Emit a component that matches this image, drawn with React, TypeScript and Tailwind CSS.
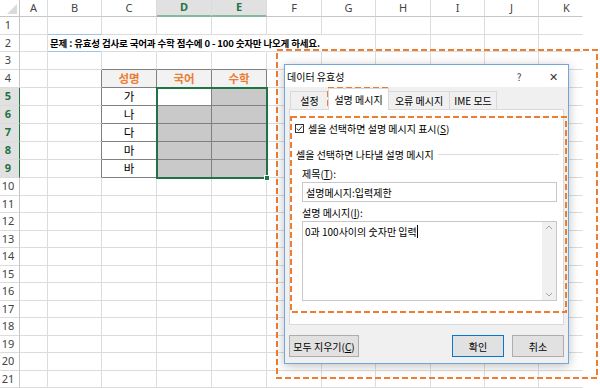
import React from 'react';

const COL_W = ['w-[20px]', 'w-[28px]', 'w-[54px]', 'w-[55px]', 'w-[55px]', 'w-[55px]', 'w-[55px]', 'w-[54px]', 'w-[55px]', 'w-[54px]', 'w-[54px]', 'w-[44px]'];
const COL_LABELS = ['', 'A', 'B', 'C', 'D', 'E', 'F', 'G', 'H', 'I', 'J', 'K'];
const NAMES: Record<number, string> = { 5: '가', 6: '나', 7: '다', 8: '마', 9: '바' };
const HEAD: Record<number, string> = { 3: '성명', 4: '국어', 5: '수학' };

function rowH(r: number) {
  if (r === 2) return 'h-[17px]';
  if (r <= 9) return 'h-[18px]';
  return r % 2 === 0 ? 'h-[18px]' : 'h-[17px]';
}

function cellCls(r: number, c: number) {
  const inTable = r >= 4 && r <= 9 && c >= 3 && c <= 5;
  const cls = ['flex items-center justify-center shrink-0 border-r border-b', COL_W[c], rowH(r)];
  if (inTable || (c === 2 && r >= 4 && r <= 9)) cls.push('border-r-[#808080]');
  else if ((r === 2 && c >= 2 && c <= 6) || c === 11) cls.push('border-r-transparent');
  else cls.push('border-r-[#dcdcdc]');
  if (inTable || (r === 3 && c >= 3 && c <= 5)) cls.push('border-b-[#808080]');
  else if (c === 2 && (r === 1 || r === 2)) cls.push('border-b-[#9dc3e6]');
  else cls.push('border-b-[#dcdcdc]');
  if (r === 4 && inTable) cls.push('bg-[#f2f2f2] text-[#ed7d31] font-bold');
  else if (inTable && ((r === 5 && c === 5) || (r >= 6 && c >= 4))) cls.push('bg-[#c9c9c9]');
  return cls.join(' ');
}

function Sheet() {
  const rows = Array.from({ length: 21 }, (_, i) => i + 1);
  return (
    <div className="flex flex-col">
      {/* column headers */}
      <div className="flex h-[17px] text-[11px] text-[#444] [font-family:'Noto_Sans',sans-serif]">
        {COL_LABELS.map((l, c) => {
          if (c === 0)
            return (
              <div key={c} className="w-[20px] h-[17px] shrink-0 border-r border-b border-[#c6c6c6] flex items-end justify-end p-[2px]">
                <svg width="10" height="10" viewBox="0 0 10 10">
                  <polygon points="10,0 10,10 0,10" fill="#dadada" />
                </svg>
              </div>
            );
          const sel = c === 4 || c === 5;
          return (
            <div
              key={c}
              className={`${COL_W[c]} h-[17px] shrink-0 flex items-center ${c === 11 ? 'justify-start pl-[24px] border-r-transparent' : 'justify-center border-r-[#dcdcdc]'} border-r ${
                sel ? 'bg-[#e1e1e1] text-[#217346] font-bold border-b-2 border-b-[#86b99b]' : 'border-b border-b-[#c6c6c6]'
              }`}
            >
              {l}
            </div>
          );
        })}
      </div>
      {rows.map((r) => {
        const selRow = r >= 5 && r <= 9;
        return (
          <div key={r} className="flex">
            <div
              className={`w-[20px] ${rowH(r)} shrink-0 flex items-center justify-center pr-[3px] border-b border-b-[#dcdcdc] border-r text-[11px] [font-family:'Noto_Sans',sans-serif] ${
                selRow ? 'bg-[#e1e1e1] text-[#217346] font-bold border-r-[#217346]' : 'text-[#444] border-r-[#c6c6c6]'
              }`}
            >
              {r}
            </div>
            {COL_LABELS.slice(1).map((_, i) => {
              const c = i + 1;
              let content: React.ReactNode = null;
              if (r === 2 && c === 2)
                content = (
                  <span className="self-center ml-[2px] whitespace-nowrap font-bold text-[9.5px] tracking-[-0.15px] text-black relative">
                    문제 : 유효성 검사로 국어과 수학 점수에 0 - 100 숫자만 나오게 하세요.
                  </span>
                );
              if (r === 4 && HEAD[c]) content = <span className="text-[11.5px]">{HEAD[c]}</span>;
              if (c === 3 && NAMES[r]) content = <span className="text-[11.5px] text-black">{NAMES[r]}</span>;
              return (
                <div key={c} className={`${cellCls(r, c)} ${r === 2 && c === 2 ? '!justify-start' : ''}`}>
                  {content}
                </div>
              );
            })}
          </div>
        );
      })}
    </div>
  );
}

function DashBox({ x, y, w, h }: { x: number; y: number; w: number; h: number }) {
  return (
    <svg className="absolute pointer-events-none" style={{ left: x, top: y }} width={w} height={h}>
      <rect x="1" y="1" width={w - 2} height={h - 2} fill="none" stroke="#ed7d31" strokeWidth="2" strokeDasharray="6 3" />
    </svg>
  );
}

function Dialog() {
  return (
    <div className="absolute left-[284px] top-[64px] w-[285px] h-[300px] flex flex-col bg-[#f0f0f0] border border-[#6fa6dc] shadow-[0_2px_10px_rgba(0,0,0,0.25)] text-[10px] text-black">
      <div className="h-[22px] bg-white flex items-center pl-[2px] pr-[5px]">
        <span>데이터 유효성</span>
        <span className="ml-auto w-[20px] text-center text-[#444]">?</span>
        <span className="ml-[14px] w-[20px] text-center text-[11px] text-[#333]">✕</span>
      </div>
      <div className="h-[22px] flex items-end pl-[5px]">
        <div className="w-[38px] h-[18px] flex items-center justify-center border-l border-t border-[#d9d9d9]">설정</div>
        <div className="relative z-10 w-[61px] h-[22px] -mb-px flex items-center justify-center bg-white border-l border-t border-r border-[#d9d9d9]">
          설명 메시지
        </div>
        <div className="w-[60px] h-[18px] flex items-center justify-center border-t border-[#d9d9d9]">오류 메시지</div>
        <div className="w-[48px] h-[18px] flex items-center justify-center border-l border-t border-r border-[#d9d9d9]">IME 모드</div>
      </div>
      <div className="mx-[4px] h-[216px] bg-white border border-[#d9d9d9] flex flex-col">
        <div className="mt-[11px] h-[14px] flex items-center pl-[5px]">
          <div className="w-[9px] h-[9px] border border-[#333] bg-white flex items-center justify-center">
            <svg width="7" height="7" viewBox="0 0 7 7">
              <path d="M0.8 3.6 L2.7 5.5 L6.2 1.3" fill="none" stroke="#222" strokeWidth="1" />
            </svg>
          </div>
          <span className="ml-[4px]">
            셀을 선택하면 설명 메시지 표시(<span className="underline">S</span>)
          </span>
        </div>
        <div className="mt-[12px] h-[14px] flex items-center pl-[6px] pr-[4px]">
          <span className="whitespace-nowrap">셀을 선택하면 나타낼 설명 메시지</span>
          <div className="ml-[4px] flex-1 h-px bg-[#dcdcdc]" />
        </div>
        <div className="mt-[5px] h-[14px] flex items-center pl-[12px]">
          제목(<span className="underline">T</span>):
        </div>
        <div className="mt-[2px] ml-[12px] w-[255px] h-[20px] border border-[#c8c8c8] flex items-center pl-[3px]">
          설명메시지:입력제한
        </div>
        <div className="mt-[3px] h-[14px] flex items-center pl-[12px]">
          설명 메시지(<span className="underline">I</span>):
        </div>
        <div className="mt-[2px] ml-[12px] w-[255px] h-[80px] border border-[#c8c8c8] flex">
          <div className="flex-1 pl-[2px] pt-[3px] flex items-start">
            <span className="leading-[13px]">0과 100사이의 숫자만 입력</span>
            <span className="w-px h-[13px] bg-black" />
          </div>
          <div className="w-[14px] bg-[#f0f0f0] flex flex-col items-center justify-between py-[3px]">
            <svg width="8" height="5" viewBox="0 0 8 5">
              <path d="M1 4 L4 1 L7 4" fill="none" stroke="#a6a6a6" strokeWidth="1" />
            </svg>
            <svg width="8" height="5" viewBox="0 0 8 5">
              <path d="M1 1 L4 4 L7 1" fill="none" stroke="#a6a6a6" strokeWidth="1" />
            </svg>
          </div>
        </div>
      </div>
      <div className="mt-[10px] mx-[4px] flex">
        <div className="w-[70px] h-[22px] flex items-center justify-center bg-[#e1e1e1] border border-[#adadad]">
          모두 지우기(<span className="underline">C</span>)
        </div>
        <div className="ml-auto w-[52px] h-[22px] flex items-center justify-center bg-[#e1e1e1] border border-[#0078d7]">
          확인
        </div>
        <div className="ml-[8px] w-[52px] h-[22px] flex items-center justify-center bg-[#e1e1e1] border border-[#adadad]">
          취소
        </div>
      </div>
    </div>
  );
}

export default function App() {
  return (
    <div className="relative w-[600px] h-[388px] overflow-hidden bg-white text-black [font-family:'Noto_Sans_CJK_KR',sans-serif]">
      <Sheet />
      {/* selected range D5:E9 */}
      <div className="absolute left-[156px] top-[87px] w-[112px] h-[92px] border-2 border-[#217346]" />
      <div className="absolute left-[264px] top-[175px] w-[6px] h-[6px] bg-[#217346] border border-white" />
      <DashBox x={276} y={49} w={322} h={330} />
      <Dialog />
      <DashBox x={327} y={87} w={62} h={23} />
      <DashBox x={290} y={116} w={277} h={197} />
    </div>
  );
}
